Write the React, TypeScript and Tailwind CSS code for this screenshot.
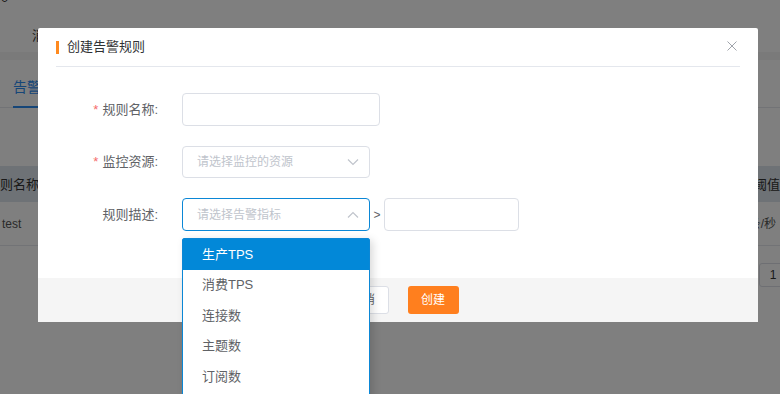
const fontStack = "font-['Liberation_Sans','Noto_Sans_CJK_SC',sans-serif]";

function ChevronIcon({ up }: { up?: boolean }) {
  return (
    <svg width="12" height="8" viewBox="0 0 12 8" className="text-[#c0c4cc]">
      <path
        d={up ? "M1 6.5 L6 1.5 L11 6.5" : "M1 1.5 L6 6.5 L11 1.5"}
        fill="none"
        stroke="currentColor"
        strokeWidth="1.2"
      />
    </svg>
  );
}

function BackgroundPage() {
  const nav = [
    { label: "消息队列", w: "w-[123px]" },
    { label: "概览", w: "w-[95px]" },
    { label: "主题", w: "w-[62px]" },
    { label: "订阅管理", w: "w-[88px]" },
    { label: "连接管理", w: "w-[85px]" },
    { label: "告警规则", w: "w-[90px]" },
    { label: "监控报表", w: "w-[80px]" },
  ];
  return (
    <div className="flex flex-col w-[780px] h-[394px] bg-white text-[#333]">
      <div className="h-[20px] -mt-[12px] pl-[1px] text-[13px] leading-[20px]">0</div>
      <div className="flex items-center h-[44px] pt-[11px] pl-[32px] text-[13px]">
        {nav.map((n) => (
          <div key={n.label} className={n.w}>
            {n.label}
          </div>
        ))}
      </div>
      <div className="h-[8px] bg-[#f4f4f4]" />
      <div className="flex items-end h-[48px] border-b border-[#e4e7ed]">
        <div className="ml-[13px] pb-[8px] w-[60px] text-[14px] text-[#2d8cf0] border-b-2 border-[#2d8cf0] -mb-[1px]">
          告警规则
        </div>
      </div>
      <div className="h-[58px]" />
      <div className="flex items-center justify-between h-[36px] pt-[2px] bg-[#dce4ec] text-[13px]">
        <span className="-ml-[13px]">规则名称</span>
        <span className="-mr-[26px]">阈值单位</span>
      </div>
      <div className="flex items-center justify-between h-[44px] border-b border-[#e4e7ed] text-[12px] text-[#555]">
        <span className="ml-[2px]">test</span>
        <span className="mr-[4px]">条/秒</span>
      </div>
      <div className="flex justify-end mt-[17px]">
        <div className="flex items-center justify-center w-[28px] h-[24px] -mr-[7px] border border-[#dcdfe6] rounded-[3px] text-[12px]">
          1
        </div>
      </div>
    </div>
  );
}

export default function App() {
  const items = ["生产TPS", "消费TPS", "连接数", "主题数", "订阅数", "消息数"];
  return (
    <div className={`relative w-[780px] h-[394px] overflow-hidden ${fontStack}`}>
      <BackgroundPage />
      <div className="absolute inset-0 bg-black/50" />

      <div className="absolute left-[38px] top-[28px] w-[720px] bg-white rounded-[2px]">
        <div className="relative flex items-center h-[39px] mx-[18px] border-b border-[#e4e7ed]">
          <div className="w-[3px] h-[13px] bg-[#ff8a1f]" />
          <span className="ml-[8px] text-[13px] text-[#303133]">创建告警规则</span>
          <svg
            width="10"
            height="10"
            viewBox="0 0 10 10"
            className="absolute right-[3px] top-[13px]"
          >
            <path d="M0.5 0.5 L9.5 9.5 M9.5 0.5 L0.5 9.5" stroke="#a0a4ab" strokeWidth="1" />
          </svg>
        </div>

        <div className="flex flex-col gap-[20px] pt-[26px] pb-[47px] text-[13px] text-[#606266]">
          <div className="flex items-center">
            <div className="w-[144px] pr-[24px] text-right">
              <span className="text-[#f56c6c] mr-[4px]">*</span>规则名称:
            </div>
            <div className="w-[198px] h-[33px] border border-[#dcdfe6] rounded-[4px]" />
          </div>

          <div className="flex items-center">
            <div className="w-[144px] pr-[24px] text-right">
              <span className="text-[#f56c6c] mr-[4px]">*</span>监控资源:
            </div>
            <div className="flex items-center justify-between w-[188px] h-[32px] pl-[14px] pr-[10px] border border-[#dcdfe6] rounded-[4px] text-[12px] text-[#c0c4cc]">
              请选择监控的资源
              <ChevronIcon />
            </div>
          </div>

          <div className="flex items-center">
            <div className="w-[144px] pr-[24px] text-right">规则描述:</div>
            <div className="flex items-center justify-between w-[188px] h-[33px] pl-[14px] pr-[10px] border border-[#0b87d6] rounded-[4px] text-[12px] text-[#c0c4cc]">
              请选择告警指标
              <ChevronIcon up />
            </div>
            <span className="w-[14px] text-center text-[12px] text-[#606266]">&gt;</span>
            <div className="w-[135px] h-[33px] border border-[#dcdfe6] rounded-[4px]" />
          </div>
        </div>

        <div className="flex items-center justify-center gap-[19px] h-[44px] bg-[#f5f5f5]">
          <button className="w-[51px] h-[28px] bg-white border border-[#dcdfe6] rounded-[3px] text-[12px] text-[#606266]">
            取消
          </button>
          <button className="w-[51px] h-[28px] bg-[#ff7f1e] rounded-[3px] text-[12px] text-white">
            创建
          </button>
        </div>

        <div className="absolute left-[144px] top-[210px] w-[188px] bg-white border border-[#0b87d6] rounded-t-[2px] shadow-[3px_2px_8px_rgba(0,0,0,0.15)] text-[13px] text-[#606266]">
          {items.map((it, i) => (
            <div
              key={it}
              className={`flex items-center h-[30.5px] pl-[19px] ${
                i === 0 ? "bg-[#0288d8] text-white" : ""
              }`}
            >
              {it}
            </div>
          ))}
        </div>
      </div>
    </div>
  );
}
